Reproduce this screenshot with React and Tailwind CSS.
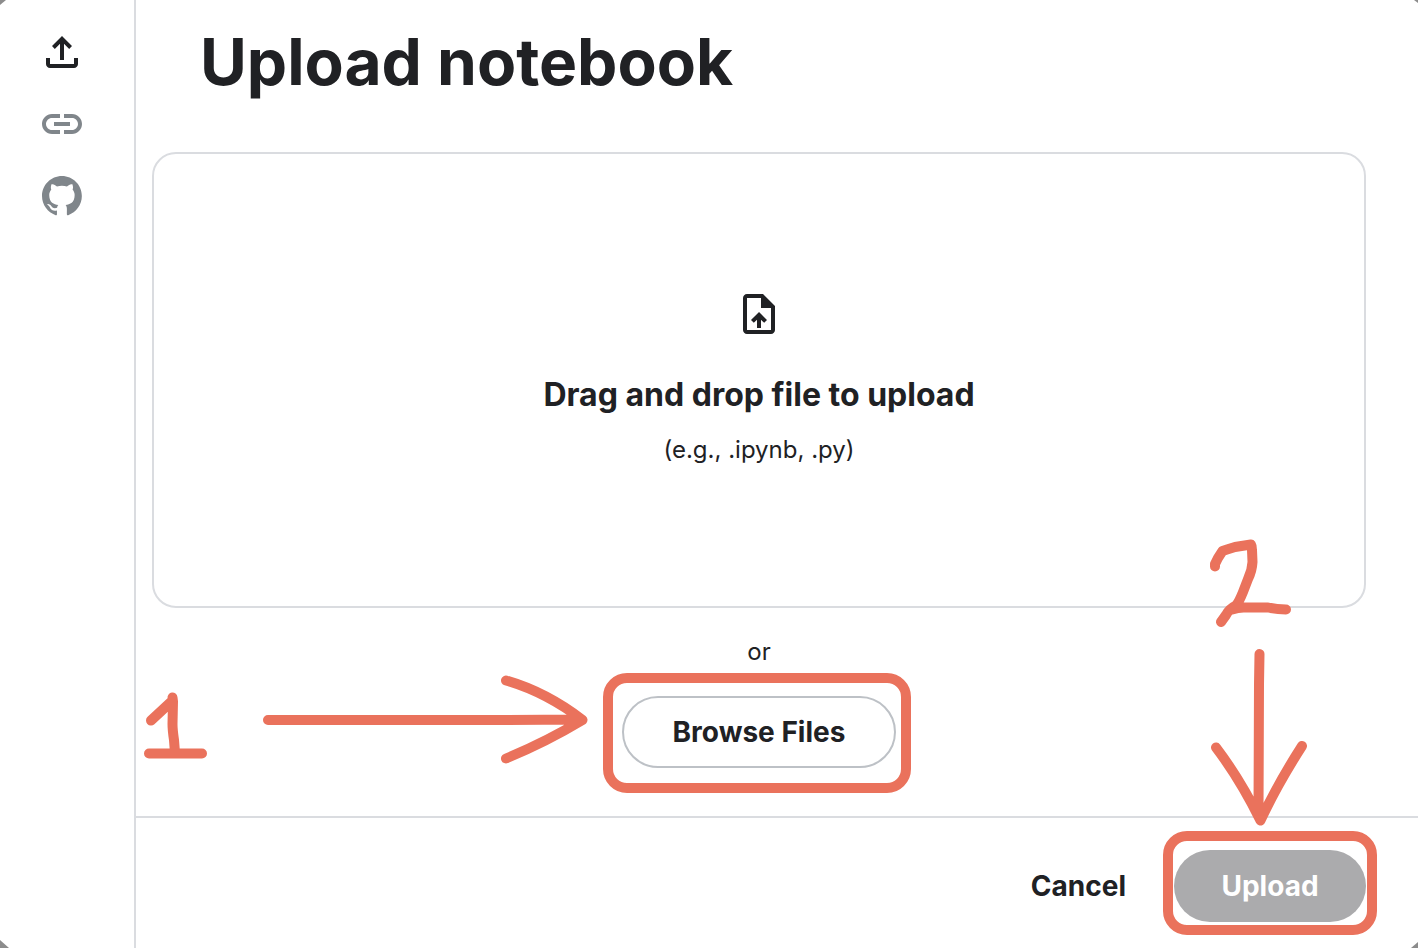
function UploadIcon() {
  return (
    <svg viewBox="0 0 24 24" className="size-12" fill="currentColor" aria-hidden="true">
      <path d="M11 16V7.85l-2.6 2.6L7 9l5-5 5 5-1.4 1.45-2.6-2.6V16h-2Zm-5 4q-.825 0-1.4125-.5875Q4 18.825 4 18v-3h2v3h12v-3h2v3q0 .825-.5875 1.4125Q18.825 20 18 20H6Z" />
    </svg>
  );
}

function LinkIcon() {
  return (
    <svg viewBox="0 0 24 24" className="size-12" fill="currentColor" aria-hidden="true">
      <path d="M11 17H7c-2.76 0-5-2.24-5-5s2.24-5 5-5h4v2H7c-1.65 0-3 1.35-3 3s1.35 3 3 3h4v2Zm-3-4v-2h8v2H8Zm5 4v-2h4c1.65 0 3-1.35 3-3s-1.35-3-3-3h-4V7h4c2.76 0 5 2.24 5 5s-2.24 5-5 5h-4Z" />
    </svg>
  );
}

function GithubIcon() {
  return (
    <svg viewBox="-9.8 -9.8 117.6 117.6" className="size-12" fill="currentColor" aria-hidden="true">
      <path
        fillRule="evenodd"
        clipRule="evenodd"
        d="M48.854 0C21.839 0 0 22 0 49.217c0 21.756 13.993 40.172 33.405 46.69 2.427.49 3.316-1.059 3.316-2.362 0-1.141-.08-5.052-.08-9.127-13.59 2.934-16.42-5.867-16.42-5.867-2.184-5.704-5.42-7.17-5.42-7.17-4.448-3.015.324-3.015.324-3.015 4.934.326 7.523 5.052 7.523 5.052 4.367 7.496 11.404 5.378 14.235 4.074.404-3.178 1.699-5.378 3.074-6.6-10.839-1.141-22.243-5.378-22.243-24.283 0-5.378 1.94-9.778 5.014-13.2-.485-1.222-2.184-6.275.486-13.038 0 0 4.125-1.304 13.426 5.052a46.97 46.97 0 0 1 12.214-1.63c4.125 0 8.33.571 12.213 1.63 9.302-6.356 13.427-5.052 13.427-5.052 2.67 6.763.97 11.816.485 13.038 3.155 3.422 5.015 7.822 5.015 13.2 0 18.905-11.404 23.06-22.324 24.283 1.78 1.548 3.316 4.481 3.316 9.126 0 6.6-.08 11.897-.08 13.526 0 1.304.89 2.853 3.316 2.364 19.412-6.52 33.405-24.935 33.405-46.691C97.707 22 75.788 0 48.854 0z"
      />
    </svg>
  );
}

function FileUploadIcon() {
  return (
    <svg viewBox="0 0 24 24" className="size-12" fill="currentColor" aria-hidden="true">
      <path d="M14 2H6c-1.1 0-2 .9-2 2v16c0 1.1.9 2 2 2h12c1.1 0 2-.9 2-2V8l-6-6Zm4 18H6V4h7v5h5v11ZM8 15.01l1.41 1.41L11 14.84V19h2v-4.16l1.59 1.59L16 15.01 12.01 11 8 15.01Z" />
    </svg>
  );
}

function Highlight({ className }) {
  return (
    <span
      aria-hidden="true"
      className={`pointer-events-none absolute rounded-[24px] border-[10px] border-[#ea725c] ${className}`}
    />
  );
}

function StepOneMark() {
  return (
    <svg
      viewBox="140 670 460 100"
      className="pointer-events-none absolute -left-[482px] -top-[26px] h-[100px] w-[460px]"
      fill="none"
      stroke="#ea725c"
      strokeWidth="10"
      strokeLinecap="round"
      strokeLinejoin="round"
      role="img"
      aria-label="Step 1"
    >
      <path d="M151 720.500L172 701M172.500 697.500L173 701.500L172.500 724Q172.500 730 174 740L175 753M149 753.500H202" />
      <path d="M268 720H500L580 719.500M506 680.500Q546 692 582.500 720Q546 742 506 758.500" />
    </svg>
  );
}

function StepTwoMark() {
  return (
    <svg
      viewBox="1200 530 120 300"
      className="pointer-events-none absolute -top-[320px] left-[26px] h-[300px] w-[120px]"
      fill="none"
      stroke="#ea725c"
      strokeWidth="10"
      strokeLinecap="round"
      strokeLinejoin="round"
      role="img"
      aria-label="Step 2"
    >
      <path d="M1215 566.500V564L1218 558L1222.500 551L1227 549.500L1235 547L1251 544.500Q1252 546 1252 550L1252.500 562Q1252 571 1248 579L1243 592Q1239 602 1236 605.500Q1229 609 1226 615L1221 622M1232 609.500Q1239 607 1246 607.500H1268Q1276 609.500 1286 609.500" />
      <path d="M1259.500 654L1259 684L1258.500 812M1216 747.500Q1240 779 1260.500 820.500Q1277 785 1302 746" />
    </svg>
  );
}

export default function App() {
  return (
    <div className="min-h-screen bg-[#8c8c8c] font-['Inter',sans-serif] text-[#202124]">
      <div className="flex min-h-screen bg-white [clip-path:polygon(6px_0,calc(100%_-_4px)_0,100%_3px,100%_calc(100%_-_6px),calc(100%_-_7px)_100%,9px_100%,0_calc(100%_-_8px),0_5px)]">
        <nav aria-label="Source" className="w-34 shrink-0 border-r-2 border-[#dadce0] pl-[38px] pt-7">
          <div className="flex flex-col items-start gap-6 text-[#80868b]">
            <button type="button" aria-label="Upload" className="text-[#202124]">
              <UploadIcon />
            </button>
            <button type="button" aria-label="URL">
              <LinkIcon />
            </button>
            <button type="button" aria-label="GitHub">
              <GithubIcon />
            </button>
          </div>
        </nav>

        <div className="flex min-w-0 flex-1 flex-col">
          <main className="flex flex-1 flex-col pb-12 pl-4 pr-[52px] pt-[22px]">
            <h1 className="mb-[50px] pl-12 text-[64px] font-bold leading-[80px]">Upload notebook</h1>

            <section className="flex flex-1 flex-col items-center justify-center rounded-[24px] border-2 border-[#dadce0] pb-1">
              <FileUploadIcon />
              <h2 className="mt-[37px] text-[32px] font-bold leading-10">Drag and drop file to upload</h2>
              <p className="mt-[19px] text-2xl leading-8">(e.g., .ipynb, .py)</p>
            </section>

            <p className="mt-7 text-center text-2xl leading-8">or</p>

            <div className="relative mt-7 self-center">
              <button
                type="button"
                className="h-18 min-w-[274px] rounded-full border-2 border-[#bdc1c6] px-12 text-[28px] font-bold leading-10"
              >
                Browse Files
              </button>
              <Highlight className="-bottom-[25px] -left-[19px] -right-[15px] -top-[23px]" />
              <StepOneMark />
            </div>
          </main>

          <footer className="flex items-center justify-end gap-12 border-t-2 border-[#dadce0] pb-[26px] pr-[52px] pt-8">
            <button type="button" className="text-[28px] font-bold leading-10">
              Cancel
            </button>
            <div className="relative">
              <button
                type="button"
                disabled
                className="h-18 min-w-48 rounded-full bg-[#ababad] px-10 text-[28px] font-bold leading-10 text-white"
              >
                Upload
              </button>
              <Highlight className="-bottom-[13px] -left-[11px] -right-[11px] -top-[19px]" />
              <StepTwoMark />
            </div>
          </footer>
        </div>
      </div>
    </div>
  );
}
